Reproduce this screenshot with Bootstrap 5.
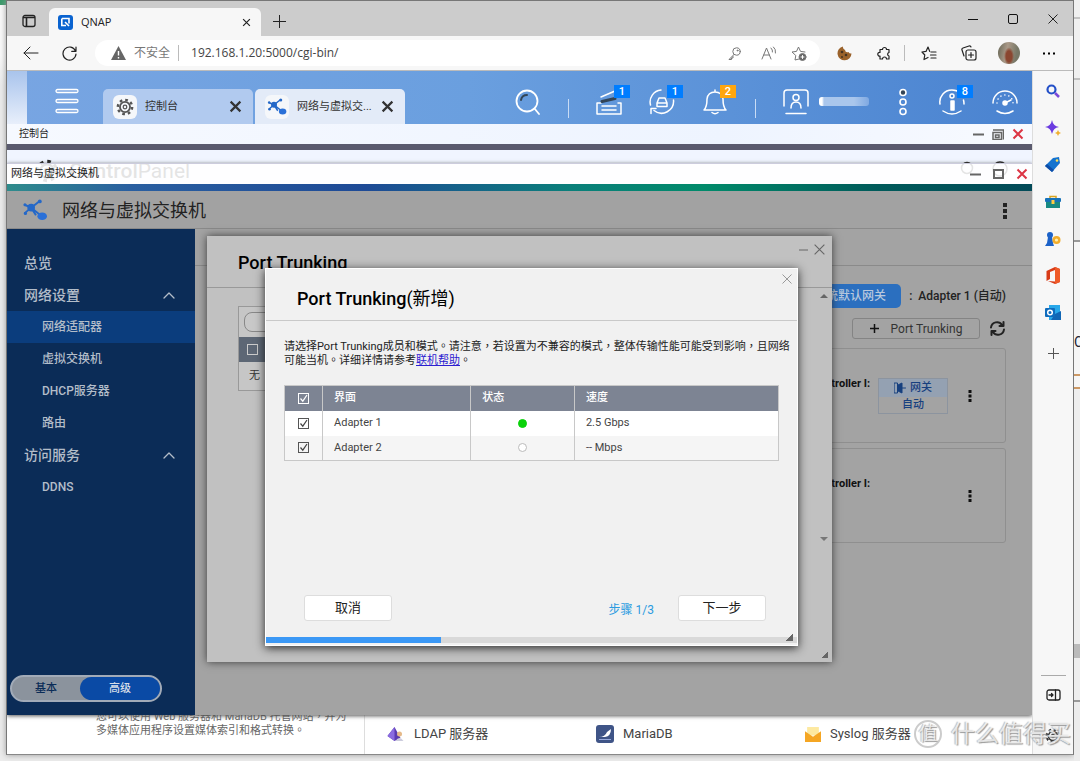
<!DOCTYPE html>
<html lang="zh-CN">
<head>
<meta charset="utf-8">
<meta name="viewport" content="width=device-width, initial-scale=1">
<title>QNAP</title>
<link href="https://cdn.jsdelivr.net/npm/bootstrap@5.3.0/dist/css/bootstrap.min.css" rel="stylesheet">
<style>
body{font-family:Roboto,"Noto Sans CJK SC",sans-serif;font-size:12px;line-height:16px;color:#222;background:#ececec;overflow:hidden}
button{font:inherit;color:inherit;background:none;border:0;padding:0}
svg{display:block;flex:none}
.ln{fill:none;stroke:currentColor;stroke-linecap:round;stroke-linejoin:round}
.tc{font-family:Roboto,"Noto Sans CJK TC",sans-serif}
.edge-l{width:6px;background:linear-gradient(#fafafa 0 50px,#ececec 80px);border-top:5px solid #3a9a6a}
.edge-r{width:6px;background:linear-gradient(#f0f0f0 0 17px,#c4c4c4 17px 19px,#f0f0f0 19px 78px,#c0c0c0 78px 80px,#ececec 80px 240px,#999 240px 242px,#f6f6f6 242px 374px,#c96 374px 376px,#f6f6f6 376px 387px,#c96 387px 389px,#eee 389px 644px,#bbb 644px 658px,#eee 658px 700px,#999 700px 702px,#ececec 702px)}
.edge-r span{margin-top:334px;font-size:14px;color:#223}
.browser{background:#f7f7f7;border:1px solid #777;border-bottom-color:#888;box-shadow:0 0 6px #999;min-width:0;margin-bottom:6px}
.ui{font-family:"Open Sans","Noto Sans CJK SC",sans-serif}
.titlebar{height:35px;background:#ccc}
.btab{width:212px;height:28px;background:#f7f7f7;border-radius:6px 6px 0 0;font-size:11px;padding:0 10px 0 9px;margin-left:2px}
.w40{width:40px;display:flex;align-items:center;justify-content:center;flex:none}
.toolbar{height:35px;border-bottom:1px solid #bbb}
.address{height:26px;border-radius:13px;background:#fff;padding:0 13px 0 16px;color:#777}
.address input{border:0;outline:0;background:none;color:#444;font-size:12px;min-width:0;padding:0}
.aloud{margin:0 14px 0 20px}
.vline{width:1px;height:16px;background:#bbb}
.avatar{width:22px;height:22px;border-radius:50%;background:radial-gradient(ellipse 5px 9px at 50% 65%,#8a4630 60%,#8a463000),linear-gradient(100deg,#665,#a98 40%,#776 80%)}
.edgebar{width:41px;background:#f7f7f7;border-left:1px solid #ddd;padding-top:1px}
.edgebar button{height:37px;width:40px;display:flex;align-items:center;justify-content:center}
.edgebar .sep{width:25px;height:1px;background:#aaa}
/* NAS desktop */
.topbar{height:53px;background:linear-gradient(90deg,#78a5e2,#6a9fdf 45%,#4a83d0);padding-right:14px;color:#fff}
.shade{width:20px;background:linear-gradient(#a9c4ec,#e8effb)}
.qtab{width:150px;height:35px;border-radius:5px 5px 0 0;background:#b1caef;color:#333;padding:0 11px 0 10px;font-size:11px;margin-right:2px}
.qtab.on{background:#e3ebf8}
.tile{width:24px;height:24px;border-radius:6px;background:#f5f7fa;display:flex;align-items:center;justify-content:center}
.tray{gap:27px;margin-bottom:6px}
.tray .bar{width:1px;height:19px;background:#c9dcf5;margin-top:14px}
.count{position:absolute;left:18px;top:-4px;width:16px;height:13px;background:#007dff;font-size:11px;line-height:13px;text-align:center;font-weight:500}
.count.warn{background:#ffa60f}
.uname{width:50px;height:9px;background:linear-gradient(90deg,#fff 0 3px,#a9c6ec 5px 35px,#7fa9e2);border-radius:3px;margin-left:10px}
.cp-title{height:20px;background:linear-gradient(90deg,#f6f9ff,#eef4ff 70%,#f8faff);font-size:10px}
.cp-bar{height:6px;background:#5a5a6e}
.cp-head{height:42px;background:#f0f5ff;font-size:21px;line-height:42px;color:#222;padding:0 24px 0 28px;gap:10px}
.cp-foot{background:#fff;color:#555;font-size:11px;line-height:14px}
.cp-foot .note{width:358px;padding-left:89px;border-right:1px solid #ddd;height:44px;color:#666}
.services{padding-right:40px}
.svc{font-size:13px;color:#444;gap:9px;padding-left:22px}
/* application window */
.appwin{position:absolute;inset:92px 0 39px 0;box-shadow:0 1px 4px #555}
.app-title{height:21px;background:#ffffffe0;border-top:1px solid #ccd;font-size:11px}
.app-strip{height:7px;background:linear-gradient(90deg,#2f8c8c,#2a5fa0 12%,#1e4a96 35%,#0a7f7a 55%,#008a6a 68%,#005a5a 85%,#034a58)}
.app-head{height:38px;background:#a2a2a2;border-bottom:1px solid #8a8a8a;font-size:18px;color:#222;padding:2px 25px 0 15px;gap:14px}
.side{width:188px;background:#0b2c57;color:#b3bdc9;padding-top:18px}
.side a{display:flex;align-items:center;justify-content:space-between;height:32px;padding:0 20px 0 35px;color:inherit;text-decoration:none;font-weight:500}
.side a.top{padding-left:17px;font-size:14px}
.side a.cur{background:#0b3d7d}
.modes{width:152px;height:27px;border-radius:14px;background:#8b939d;border:2px solid #a2abb8;font-size:11px;font-weight:500;margin:0 0 13px 3px;color:#0b2c57}
.modes button{flex:1}
.modes .on{border-radius:12px;background:#0a4aa5;color:#d5dde8;flex:0 0 80px}
.main{background:#a3a3a3}
.crumb{height:37px;border-bottom:1px solid #8a8a8a}
.pane{padding:18px 26px 0 24px}
.tools{padding:10px 0 9px;gap:9px}
.gw{height:24px;border-radius:5px;background:#2b6fbf;color:#b9c9de;padding:0 15px;font-weight:500}
.outline{height:21px;width:128px;border:1px solid #848484;border-radius:3px;color:#333;gap:12px}
.panel{height:95px;border:1px solid #8f8f8f;border-radius:3px;margin-bottom:5px;padding-right:33px;gap:8px;color:#111;font-weight:700;font-size:11px}
.panel .more{margin-left:12px}
.panel .nogate{margin-right:78px}
.gate{width:70px;border:1px solid #8c949f;color:#17407f;font-size:11px;line-height:16px;text-align:center;font-weight:500}
.gate div:first-child{background:#94a1b2;height:18px}
.dlg{position:absolute}
.dlg1{inset:45px 200px 53px 200px;background:#c1c1c1;box-shadow:0 0 8px #222c}
.dlg2{inset:77px 234px 69px 258px;background:#f1f1f1;box-shadow:0 2px 9px #111d;border:1px solid #fff}
.dlg h2{font-size:18px;line-height:24px;font-weight:500;color:#000;margin:0}
.dlg1 .dh{height:52px;padding:0 6px 0 31px;border-bottom:1px solid #999}
.dlg1 h2{padding-top:15px}
.dlg2 .dh{height:52px;padding:0 4px 0 31px;border-bottom:1px solid #c9c9c9;color:#999}
.dlg2 h2{padding-top:18px}
.wctl{padding-top:7px;gap:5px;color:#666}
.dclose{padding-top:4px}
.mini{width:150px;margin:18px 0 0 31px;border:1px solid #999;background:#c6c6c6}
.mini .fnd{height:30px;padding:5px 5px}
.mini .fnd input{width:100%;height:20px;border:1px solid #888;border-radius:8px;background:#c8c8c8;display:block}
.mini .hd{height:25px;background:#5d6775;padding-left:8px}
.mini .bd{height:28px;padding:6px 10px;color:#333;font-size:11px}
.mini input[type=checkbox]{appearance:none;width:11px;height:11px;border:1px solid #ccc;margin:0}
.intro{margin:19px 0 17px 18px;font-size:11px;line-height:14px}
.intro a{color:#2b20d0}
.ports{margin:0 18px;width:calc(100% - 36px);table-layout:fixed;border:1px solid #c8c8c8;border-collapse:collapse;font-size:11px;color:#444}
.ports th{background:#7d8493;color:#fff;font-weight:500}
.ports th,.ports td{height:25px;padding:0 0 0 11px;border-right:1px solid #c8c8c8;line-height:16px;vertical-align:middle}
.ports td{background:#fff}
.ports tr:last-child td{background:#f5f5f5}
.ports .c{padding:0;text-align:center}
.ports input{appearance:none;color:#555;width:11px;height:11px;border:1px solid currentColor;display:block;margin:0 auto;background:url("data:image/svg+xml,%3Csvg xmlns='http://www.w3.org/2000/svg' viewBox='0 0 9 9'%3E%3Cpath d='M1.5 4.5l2.3 2.7L8 1' fill='none' stroke='%23444' stroke-width='1.2'/%3E%3C/svg%3E") no-repeat center}
.ports th input{color:#fff;background-image:url("data:image/svg+xml,%3Csvg xmlns='http://www.w3.org/2000/svg' viewBox='0 0 9 9'%3E%3Cpath d='M1.5 4.5l2.3 2.7L8 1' fill='none' stroke='white' stroke-width='1.2'/%3E%3C/svg%3E")}
.dot{display:block;margin:0 auto;width:9px;height:9px;border-radius:50%;border:1px solid #bbb;background:#fff}
.dot.up{background:#0ad20a;border-color:#0ad20a}
.wizard{padding:0 31px 0 38px}
.wbtn{width:88px;height:26px;background:#fff;border:1px solid #ddd;border-radius:3px;color:#222;font-size:13px}
.step{color:#2b9be0;font-size:12px;padding-top:3px}
.prog{height:6px;border-radius:0;background:#d9d9d9;margin-bottom:2px}
.prog .progress-bar{background:#3b98f5}
.grip{position:absolute;right:4px;bottom:4px;width:7px;height:7px;background:linear-gradient(135deg,transparent 50%,#666 50%)}
.arrow{position:absolute;right:4px;border:4px solid transparent}
.arrow.u{top:54px;border-bottom-color:#666}
.arrow.d{bottom:117px;border-top-color:#777}
.wm{position:absolute;right:9px;bottom:10px;z-index:9;color:#ffffffb0;font-size:24px;line-height:34px;text-shadow:1px 1px 1px #999,-1px 0 1px #bbb;pointer-events:none;gap:9px}
.wm .seal{width:28px;height:28px;line-height:24px;border:2px solid #ccc;border-radius:50%;font-size:19px;text-align:center}
</style>
</head>
<body>
<svg width="0" height="0" class="position-absolute">
<defs>
<symbol id="gear" viewBox="0 0 20 20"><circle cx="10" cy="10" r="5.6" fill="none" stroke="currentColor" stroke-width="2"/><circle cx="10" cy="10" r="8" fill="none" stroke="currentColor" stroke-width="2.6" stroke-dasharray="3 3.28"/><circle cx="10" cy="10" r="2" fill="none" stroke="currentColor" stroke-width="1.4"/></symbol>
<symbol id="x" viewBox="0 0 12 12"><path d="M1.5 1.5l9 9m0-9l-9 9" fill="none" stroke="currentColor" stroke-width="var(--w,1)"/></symbol>
<symbol id="net" viewBox="0 0 26 24"><path d="M18 2L9 9l-7 6m0-9l7 3 5 8M9 9l11 9" stroke="#2468c8" stroke-width="2" fill="none"/><circle cx="9" cy="9" r="4" fill="#2468c8"/><circle cx="18" cy="2.500" r="2" fill="#2468c8"/><ellipse cx="20.500" cy="18" rx="5" ry="4" fill="#2a70d8"/><circle cx="2.500" cy="6" r="1.600" fill="#2468c8"/><circle cx="3" cy="15" r="1.700" fill="#2468c8"/></symbol>
<symbol id="keb" viewBox="0 0 4 16"><path d="M0 0h4v4H0zM0 6h4v4H0zM0 12h4v4H0z" fill="currentColor"/></symbol>
</defs>
</svg>

<div class="d-flex vh-100 position-relative">
  <div class="edge-l"></div>
  <div class="browser flex-fill d-flex flex-column">
    <div class="titlebar d-flex align-items-end ui">
      <div class="w40 align-self-center pt-1 ps-1"><svg width="14" height="14" viewBox="0 0 14 14"><rect x="1" y="1.500" width="12" height="11" rx="2" fill="none" stroke="#222" stroke-width="1.300"/><path d="M1 3.500h12M4.500 4v8" stroke="#222" stroke-width="1.600"/></svg></div>
      <div class="btab d-flex align-items-center">
        <svg width="15" height="15" viewBox="0 0 15 15"><rect width="15" height="15" rx="3" fill="#0a63d0"/><path d="M4 3.500h7v5M8 10.500H3.800v-7" fill="none" stroke="#fff" stroke-width="1.600"/><path d="M7 7l4 4" stroke="#fff" stroke-width="1.600"/></svg>
        <span class="ms-2 flex-fill">QNAP</span>
        <button aria-label="关闭标签页"><svg width="9" height="9" style="--w:1.6"><use href="#x"/></svg></button>
      </div>
      <button class="ms-2 mb-2 ps-1" aria-label="新标签页"><svg width="13" height="13" viewBox="0 0 13 13"><path d="M6.500 0v13M0 6.500h13" stroke="#222"/></svg></button>
      <div class="ms-auto d-flex align-self-center">
        <button class="w40" aria-label="最小化"><svg width="10" height="10"><path d="M0 5.500h10" stroke="#111"/></svg></button>
        <button class="w40" aria-label="最大化"><svg width="10" height="10"><rect x=".5" y=".5" width="9" height="9" rx="1.500" fill="none" stroke="#111"/></svg></button>
        <button class="w40" aria-label="关闭"><svg width="12" height="12"><use href="#x"/></svg></button>
      </div>
    </div>
    <div class="toolbar d-flex align-items-center ui">
      <button class="w40 ps-2" aria-label="后退"><svg class="ln" width="16" height="14" viewBox="0 0 16 14"><path d="M15 7H1m6-6L1 7l6 6"/></svg></button>
      <button class="w40 ps-1" aria-label="刷新"><svg class="ln" width="15" height="15" viewBox="0 0 15 15" stroke-width="1.200"><path d="M13.500 5A6.500 6.500 0 1 0 14 8M14 1v4.300H9.700"/></svg></button>
      <div class="address flex-fill d-flex align-items-center ms-2">
        <svg width="15" height="14" viewBox="0 0 15 14"><path d="M7.500 0L15 14H0z" fill="#666"/><path d="M7.500 5v4.500M7.500 11v1.500" stroke="#fff" stroke-width="1.400"/></svg>
        <span class="ms-2 text-nowrap">不安全</span><span class="vline mx-2"></span>
        <input class="flex-fill ms-1" aria-label="地址" value="192.168.1.20:5000/cgi-bin/">
        <svg class="ln" width="13" height="13" viewBox="0 0 13 13"><circle cx="8.500" cy="4.500" r="3.700"/><path d="M6 7.500L1 12.500h2.500V11H5V9.500"/><circle cx="9.500" cy="3.500" r=".5"/></svg>
        <svg class="ln aloud" width="16" height="14" viewBox="0 0 16 14"><path d="M1 13L5.500 2 10 13M2.800 9h5.500M10 2q2 2 1.500 4M12.500 1q2.500 2 2 6"/></svg>
        <svg class="ln" width="16" height="15" viewBox="0 0 16 15"><path d="M8 13l-4 1 .8-4.500L1 6l4.500-.6L7.500 1l2 4.400L14 6"/><circle cx="11.500" cy="11" r="3.500" fill="#666"/><path d="M11.500 9.500v3M10 11h3" stroke="#fff"/></svg>
      </div>
      <div class="d-flex align-items-center pe-1 ms-1">
        <button class="w40" aria-label="Cookie"><svg width="15" height="15" viewBox="0 0 15 15"><path d="M6 .5a7 7 0 1 0 8.500 7q-2 .5-3-1.500Q8.500 7 8 4 5.500 3 6 .5z" fill="#9a622b"/><circle cx="5" cy="6" r="1.300" fill="#432"/><circle cx="9" cy="9" r="1.300" fill="#432"/><circle cx="5" cy="11" r="1" fill="#432"/></svg></button>
        <button class="w40" aria-label="扩展"><svg class="ln" width="15" height="15" viewBox="0 0 15 15" stroke-width="1.200"><path d="M3 3.500h2.500a2 2 0 1 1 4 0H12v3a1.800 1.800 0 0 0 0 3.500v3H9.500a2 2 0 0 0-4 0H3V10a1.800 1.800 0 1 1 0-3.500z"/></svg></button>
        <span class="vline me-1"></span>
        <button class="w40" aria-label="收藏夹"><svg class="ln" width="16" height="15" viewBox="0 0 16 15" stroke-width="1.200"><path d="M7 11.500l-4 2 .8-4.500L1 6l4-.6L7 1l1.700 4.400M10 6h5M9.500 9H15M10 12h5"/></svg></button>
        <button class="w40" aria-label="集锦"><svg class="ln" width="16" height="16" viewBox="0 0 16 16" stroke-width="1.200"><rect x="5" y="5" width="10" height="10" rx="2"/><path d="M10 7.500v5M7.500 10h5M3 11L1 5q-.5-1.500 1-2l6-2q1.500-.5 2 1"/></svg></button>
        <button class="w40" aria-label="个人资料"><span class="avatar"></span></button>
        <button class="w40" aria-label="更多"><svg width="13" height="3"><path d="M0 .5h2v2H0zM5 .5h2v2H5zM10 .5h2v2h-2z"/></svg></button>
      </div>
    </div>

    <div class="flex-fill d-flex" style="min-height:0">
      <div class="flex-fill position-relative d-flex flex-column overflow-hidden">
        <div class="topbar d-flex align-items-end flex-shrink-0">
          <div class="shade align-self-stretch"></div>
          <button class="mx-4 mb-2 ps-1" aria-label="主菜单"><svg width="24" height="28" viewBox="0 0 24 28"><g fill="#7aa5e0" stroke="#fff" stroke-width="1.300"><rect x="1" y="1.500" width="22" height="3" rx="1.500"/><rect x="1" y="11.500" width="22" height="3" rx="1.500"/><rect x="1" y="21.500" width="22" height="3" rx="1.500"/></g></svg></button>
          <div class="qtab d-flex align-items-center">
            <span class="tile"><svg width="18" height="18" color="#555"><use href="#gear"/></svg></span><span class="ms-2 flex-fill">控制台</span>
            <button aria-label="关闭控制台"><svg width="13" height="13" style="--w:2"><use href="#x"/></svg></button>
          </div>
          <div class="qtab on d-flex align-items-center">
            <span class="tile"><svg width="20" height="18"><use href="#net"/></svg></span><span class="ms-2 flex-fill text-nowrap">网络与虚拟交...</span>
            <button aria-label="关闭网络与虚拟交换机"><svg width="13" height="13" style="--w:2"><use href="#x"/></svg></button>
          </div>
          <div class="tray d-flex align-items-center ms-auto">
            <svg class="ln" width="26" height="26" viewBox="0 0 26 26" stroke-width="1.800"><circle cx="12" cy="12" r="10.500"/><path d="M19.500 19.500L24 25"/><path d="M6 11q1-5 6-5" stroke="#345" stroke-width="2"/></svg>
            <span class="bar"></span>
            <div class="position-relative"><svg class="ln" width="26" height="26" viewBox="0 0 26 26" stroke-width="1.500"><path d="M5 14H1v11h24V14h-3M6 17h14M6 21h14M5 8l14-6"/><path d="M6 12.500l13-3" stroke="#345" stroke-width="3"/></svg><span class="count">1</span></div>
            <div class="position-relative"><svg class="ln" width="26" height="26" viewBox="0 0 26 26" stroke-width="1.500"><path d="M1.500 16A12 12 0 0 1 12 1M24.500 11A12 12 0 0 1 5 21.500M2 24.500v-5h5M10 9h6l2 5H8zM8 14h10v3.500H8z"/></svg><span class="count">1</span></div>
            <div class="position-relative"><svg class="ln" width="26" height="26" viewBox="0 0 26 26" stroke-width="1.500"><path d="M2 21q3-3 3-11 1-7 8-7t8 7q0 8 3 11zM13 3V1M10 23.500q3 2.500 6 0"/></svg><span class="count warn">2</span></div>
            <span class="bar"></span>
            <div class="d-flex align-items-center"><svg class="ln" width="26" height="26" viewBox="0 0 26 26" stroke-width="1.500"><path d="M1 17V4q0-3 3-3h18q3 0 3 3v13M3 24.500h20M8 19q0-6 5-6t5 6"/><circle cx="13" cy="8.500" r="3"/></svg><span class="uname"></span></div>
            <svg class="ln" width="16" height="28" viewBox="0 0 16 28" stroke-width="1.600"><circle cx="7" cy="4.500" r="3" fill="#345"/><circle cx="7" cy="14" r="3"/><circle cx="7" cy="23.500" r="3"/></svg>
            <div class="position-relative"><svg class="ln" width="26" height="26" viewBox="0 0 26 26" stroke-width="1.500"><path d="M1 15A12 12 0 0 1 13 1q5 0 8 3M25 15q0-2-.5-4M4 22q9 6 18 0"/><circle cx="13" cy="7" r="2"/><rect x="12" y="12" width="3" height="9" fill="#fff"/></svg><span class="count">8</span></div>
            <svg class="ln" width="26" height="26" viewBox="0 0 26 26" stroke-width="1.500"><path d="M1 14a12 12 0 1 1 24 0M5 22q8 5 16 0M13 14l6-3"/><circle cx="13" cy="14" r="2" fill="#fff"/><path d="M5 14a8 8 0 0 1 16 0" stroke-dasharray=".1 4"/></svg>
          </div>
        </div>
        <div class="cp-title d-flex align-items-center flex-shrink-0 ps-2 pe-2">
          <span class="ms-1 flex-fill">控制台</span>
          <svg width="11" height="11"><path d="M0 5.500h11" stroke="#666" stroke-width="2"/></svg>
          <svg class="mx-2" width="12" height="11" viewBox="0 0 12 11"><path d="M1 3.500h8.500v7H1zM1 1h10.500v9.500M3.500 6h3.500v2.500H3.500z" fill="none" stroke="#666" stroke-width="1.500"/></svg>
          <svg width="12" height="12" class="text-danger" style="--w:2"><use href="#x"/></svg>
        </div>
        <div class="cp-bar flex-shrink-0"></div>
        <div class="cp-head d-flex align-items-center flex-shrink-0">
          <svg width="24" height="24"><use href="#gear"/></svg><span class="flex-fill"><b class="fw-medium">Control</b>Panel</span>
          <svg class="ln" width="14" height="22" viewBox="0 0 14 22" stroke-width="1.500"><circle cx="7" cy="8" r="5.500"/></svg>
          <svg class="ln ms-2" width="16" height="22" viewBox="0 0 16 22" stroke-width="1.500"><circle cx="8" cy="9" r="7"/></svg>
        </div>
        <div class="cp-foot mt-auto d-flex flex-shrink-0">
          <div class="note tc flex-shrink-0" lang="zh-TW">您可以使用 Web 服务器和 MariaDB 托管网站，并为<br>多媒体应用程序设置媒体索引和格式转换。</div>
          <div class="services row g-0 flex-fill align-items-center pt-1">
            <div class="col svc d-flex align-items-center"><svg width="18" height="15" viewBox="0 0 17 15"><path d="M7 0l6 11-6 3-7-5z" fill="#5a3bb0"/><path d="M7 0v14l-7-5z" fill="#8a6be0"/><circle cx="12" cy="7" r="2.500" fill="#e5b98a"/><path d="M8 14q4-6 8 0z" fill="#ccd"/></svg>LDAP 服务器</div>
            <div class="col svc d-flex align-items-center"><svg width="18" height="18" viewBox="0 0 18 18"><rect width="18" height="18" rx="3" fill="#3f5487"/><path d="M3 12q6 0 8-5l4-3q0 7-6 8z" fill="#fff"/><path d="M3 14.500h12" stroke="#9ad"/></svg>MariaDB</div>
            <div class="col svc d-flex align-items-center"><svg width="16" height="15" viewBox="0 0 15 14"><path d="M2 0h11v8H2z" fill="#fde9a0"/><path d="M0 4l7.500 5L15 4v10H0z" fill="#f5a623"/></svg><span class="text-nowrap">Syslog 服务器</span></div>
          </div>
        </div>

        <div class="appwin d-flex flex-column">
          <div class="app-title d-flex align-items-center flex-shrink-0 ps-1 pe-1">
            <span class="flex-fill">网络与虚拟交换机</span>
            <button aria-label="最小化"><svg width="11" height="11"><path d="M0 5.500h11" stroke="#666" stroke-width="2"/></svg></button>
            <button class="mx-2 px-1" aria-label="最大化"><svg width="11" height="10"><rect x="1" y="1" width="9" height="8" fill="none" stroke="#666" stroke-width="2"/></svg></button>
            <button class="text-danger" aria-label="关闭"><svg width="12" height="12" style="--w:2"><use href="#x"/></svg></button>
          </div>
          <div class="app-strip flex-shrink-0"></div>
          <div class="flex-fill position-relative d-flex flex-column">
            <div class="app-head d-flex align-items-center flex-shrink-0"><svg width="26" height="23"><use href="#net"/></svg><span class="flex-fill">网络与虚拟交换机</span><svg width="4" height="16"><use href="#keb"/></svg></div>
            <div class="flex-fill d-flex">
              <nav class="side d-flex flex-column">
                <a class="top" href="#">总览</a>
                <a class="top" href="#">网络设置<svg class="ln" width="12" height="8" viewBox="0 0 12 8" stroke-width="1.300"><path d="M1 7l5-5 5 5"/></svg></a>
                <a class="cur" href="#">网络适配器</a>
                <a href="#">虚拟交换机</a>
                <a href="#">DHCP服务器</a>
                <a href="#">路由</a>
                <a class="top" href="#">访问服务<svg class="ln" width="12" height="8" viewBox="0 0 12 8" stroke-width="1.300"><path d="M1 7l5-5 5 5"/></svg></a>
                <a href="#">DDNS</a>
                <div class="modes d-flex mt-auto"><button>基本</button><button class="on">高级</button></div>
              </nav>
              <div class="main flex-fill">
                <div class="crumb"></div>
                <div class="pane">
                  <div class="d-flex justify-content-end align-items-center"><button class="gw">系统默认网关</button><b class="ms-2 fw-medium">:&nbsp; Adapter 1 (自动)</b></div>
                  <div class="tools d-flex justify-content-end align-items-center"><button class="outline d-flex align-items-center justify-content-center"><svg width="9" height="9"><path d="M4.500 0v9M0 4.500h9" stroke="#111" stroke-width="1.500"/></svg>Port Trunking</button>
                    <button aria-label="刷新"><svg class="ln" width="17" height="15" viewBox="0 0 17 15" stroke-width="2"><path d="M2 6.500a6 6 0 0 1 11-2.500M15 8.500a6 6 0 0 1-11 2.500M14.500 1v4h-4M2.500 14v-4h4"/></svg></button></div>
                  <div class="panel d-flex align-items-center justify-content-end"><span class="mb-4">2.5GbE Controller I:</span><div class="gate"><div class="d-flex justify-content-center align-items-center"><svg class="ln me-1" width="12" height="12" viewBox="0 0 12 12"><rect x=".5" y="1" width="3" height="10"/><path d="M4 3l4-2v10L4 9z" fill="currentColor"/><path d="M8 6h3.500"/></svg>网关</div><div>自动</div></div><svg class="more" width="4" height="12"><use href="#keb"/></svg></div>
                  <div class="panel d-flex align-items-center justify-content-end"><span class="mb-4 nogate">GbE Controller I:</span><svg class="more" width="4" height="12"><use href="#keb"/></svg></div>
                </div>
              </div>
            </div>

            <section class="dlg dlg1">
              <div class="dh d-flex align-items-start"><h2 class="flex-fill">Port Trunking</h2><div class="wctl d-flex align-items-center"><svg class="ln" width="9" height="10"><path d="M0 5h9"/></svg><svg width="13" height="13"><use href="#x"/></svg></div></div>
              <div class="mini"><div class="fnd"><input type="text" aria-label="搜索"></div><div class="hd d-flex align-items-center"><input type="checkbox" aria-label="全选"></div><div class="bd">无</div></div>
              <span class="arrow u"></span><span class="arrow d"></span><span class="grip"></span>
            </section>

            <section class="dlg dlg2 d-flex flex-column">
              <div class="dh d-flex align-items-start"><h2 class="flex-fill">Port Trunking<span class="fw-normal">(新增)</span></h2><button class="dclose" aria-label="关闭"><svg width="12" height="12"><use href="#x"/></svg></button></div>
              <p class="intro tc" lang="zh-TW">请选择Port Trunking成员和模式。请注意，若设置为不兼容的模式，整体传输性能可能受到影响，且网络<br>可能当机。详细详情请参考<a href="#">联机帮助</a>。</p>
              <table class="ports">
                <colgroup><col style="width:38px"><col style="width:30%"><col style="width:21%"><col></colgroup>
                <thead><tr><th class="c"><input type="checkbox" checked aria-label="全选"></th><th>界面</th><th>状态</th><th>速度</th></tr></thead>
                <tbody>
                <tr><td class="c"><input type="checkbox" checked aria-label="Adapter 1"></td><td>Adapter 1</td><td class="c"><span class="dot up"></span></td><td>2.5 Gbps</td></tr>
                <tr><td class="c"><input type="checkbox" checked aria-label="Adapter 2"></td><td>Adapter 2</td><td class="c"><span class="dot"></span></td><td>-- Mbps</td></tr>
                </tbody>
              </table>
              <div class="wizard mt-auto d-flex align-items-center mb-3">
                <button class="wbtn">取消</button><span class="step ms-auto me-4">步骤 1/3</span><button class="wbtn">下一步</button>
              </div>
              <div class="progress prog" role="progressbar" aria-label="步骤" aria-valuenow="33" aria-valuemin="0" aria-valuemax="100"><div class="progress-bar" style="width:33%"></div></div>
              <span class="grip"></span>
            </section>
          </div>
        </div>
      </div>

      <aside class="edgebar d-flex flex-column align-items-center flex-shrink-0">
        <button aria-label="搜索"><svg width="14" height="14" viewBox="0 0 14 14"><circle cx="5.500" cy="5.500" r="4" fill="none" stroke="#2450c8" stroke-width="2.200"/><path d="M9 9l4 4" stroke="#7a4ad8" stroke-width="2.500"/></svg></button>
        <button aria-label="发现"><svg width="16" height="16" viewBox="0 0 16 16"><path d="M7 0q1 6 7 7-6 1-7 7-1-6-7-7 6-1 7-7z" fill="#6a3be0"/><path d="M13 10q.5 2.500 3 3-2.500.5-3 3-.5-2.500-3-3 2.500-.5 3-3z" fill="#f0b030"/></svg></button>
        <button aria-label="购物"><svg width="16" height="15" viewBox="0 0 16 15"><path d="M8 1l6-1 1 6-8 9-7-6z" fill="#1473cf"/><path d="M0 9l7 6 2-2-7-6z" fill="#0d4da8"/><circle cx="12" cy="3.500" r="1.300" fill="#fd5"/></svg></button>
        <button aria-label="工具"><svg width="16" height="14" viewBox="0 0 16 14"><path d="M5 4V1.500h6V4" fill="none" stroke="#d9a520" stroke-width="1.500"/><rect y="3" width="16" height="4" rx="1" fill="#1672b8"/><path d="M1 7h14v6H1z" fill="#178a84"/><rect x="6.500" y="5" width="3" height="4" fill="#fc4"/></svg></button>
        <button aria-label="游戏"><svg width="16" height="14" viewBox="0 0 16 14"><circle cx="5" cy="3" r="3" fill="#1c62c8"/><path d="M3 5h4l1 6 1 3H0l2-3z" fill="#1c62c8"/><circle cx="11.500" cy="8" r="4" fill="#f2ad2c"/><circle cx="11.500" cy="8" r="1.600" fill="#fff0b0"/></svg></button>
        <button aria-label="Office"><svg width="15" height="17" viewBox="0 0 15 17"><path d="M9 0l5 2v13l-5 2-7-3 7 .5V3L4 5v7l-3.500 2V4z" fill="#d83b18"/><path d="M9 0l5 2v13l-5 2z" fill="#ef5a28"/></svg></button>
        <button aria-label="Outlook"><svg width="16" height="15" viewBox="0 0 16 15"><path d="M4 0h11v15H4z" fill="#28a8ea"/><path d="M10 9l6-3v9H6z" fill="#1066b5"/><rect y="3" width="10" height="9" rx="1" fill="#0f6cbd"/><circle cx="5" cy="7.500" r="2.300" fill="none" stroke="#fff" stroke-width="1.500"/></svg></button>
        <button class="mt-1" aria-label="添加"><svg width="11" height="11"><path d="M5.500 0v11M0 5.500h11" stroke="#555"/></svg></button>
        <span class="sep mt-auto"></span>
        <button aria-label="隐藏侧栏"><svg class="ln" width="15" height="12" viewBox="0 0 15 12" stroke-width="1.300"><rect x="1" y="1" width="13" height="10" rx="2"/><path d="M9.500 1v10M3 6h4M5.500 4.500L7 6 5.500 7.500"/></svg></button>
        <button class="mt-1" aria-label="设置"><svg width="16" height="16" color="#333"><use href="#gear"/></svg></button>
      </aside>
    </div>
  </div>
  <div class="edge-r overflow-hidden d-flex"><span>Co</span></div>
  <div class="wm d-flex align-items-center"><span class="seal">值</span><span>什么值得买</span></div>
</div>
<script src="https://cdn.jsdelivr.net/npm/bootstrap@5.3.0/dist/js/bootstrap.bundle.min.js"></script>
</body>
</html>
